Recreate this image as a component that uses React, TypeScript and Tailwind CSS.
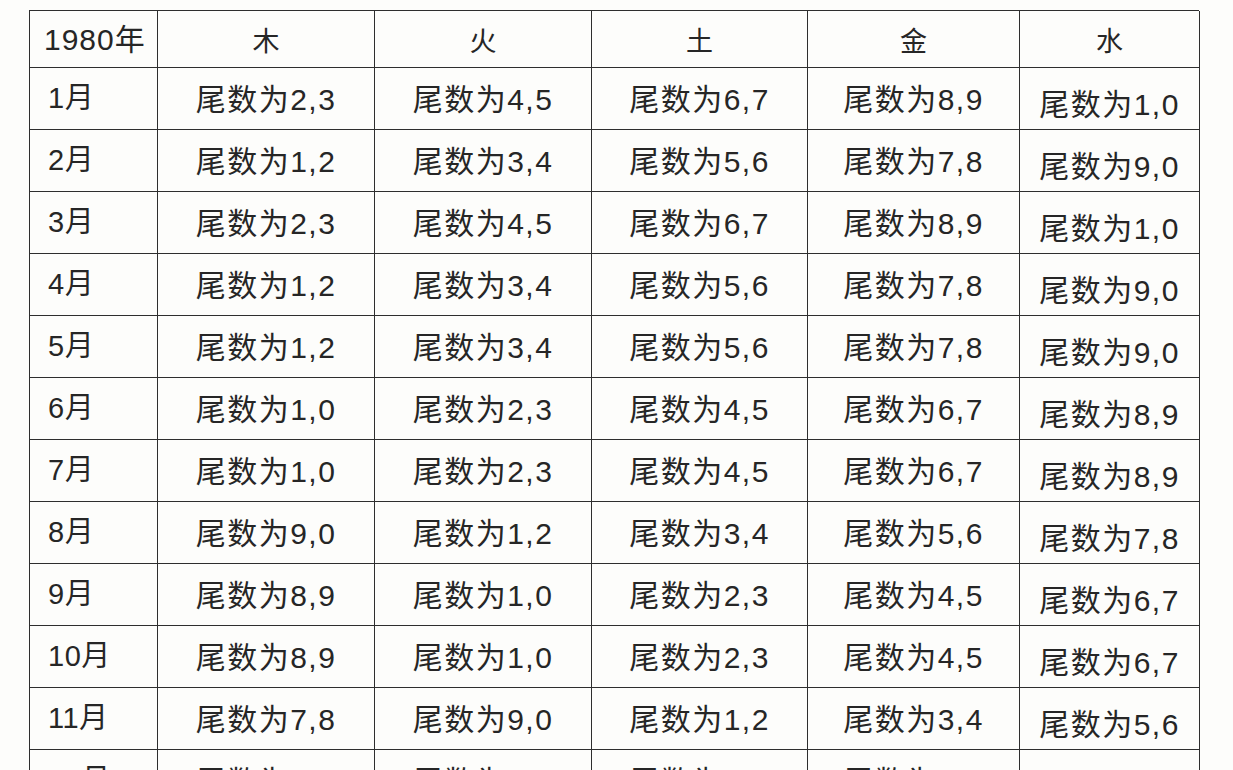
import React from 'react';

const HEAD = ['1980年', '木', '火', '土', '金', '水'];

const ROWS: [string, string[]][] = [
  ['1月', ['2,3', '4,5', '6,7', '8,9', '1,0']],
  ['2月', ['1,2', '3,4', '5,6', '7,8', '9,0']],
  ['3月', ['2,3', '4,5', '6,7', '8,9', '1,0']],
  ['4月', ['1,2', '3,4', '5,6', '7,8', '9,0']],
  ['5月', ['1,2', '3,4', '5,6', '7,8', '9,0']],
  ['6月', ['1,0', '2,3', '4,5', '6,7', '8,9']],
  ['7月', ['1,0', '2,3', '4,5', '6,7', '8,9']],
  ['8月', ['9,0', '1,2', '3,4', '5,6', '7,8']],
  ['9月', ['8,9', '1,0', '2,3', '4,5', '6,7']],
  ['10月', ['8,9', '1,0', '2,3', '4,5', '6,7']],
  ['11月', ['7,8', '9,0', '1,2', '3,4', '5,6']],
  ['12月', ['7,8', '9,0', '1,2', '3,4', '5,6']],
];

const cols = 'grid grid-cols-[128px_217px_217px_216px_212px_180px]';
const cell = 'border-r-[1.5px] border-b-[1.5px] border-[#2e2e2e] flex items-center';

export default function App() {
  return (
    <div
      className="h-[770px] w-[1233px] overflow-hidden bg-[#fdfdfb] text-[#262626] pl-[29px] pt-[10px]"
      style={{ fontFamily: '"Liberation Sans", "Noto Sans CJK SC", sans-serif' }}
    >
      <div className="w-[1170px] border-l-[1.5px] border-t-[1.5px] border-[#2e2e2e]">
        {/* header */}
        <div className={`${cols} h-[57px]`}>
          {HEAD.map((h, i) => (
            <div
              key={h}
              className={`${cell} ${i === 0 ? 'pl-[14px] text-[30px] tracking-[1px]' : 'justify-center text-[27px] pt-[6px]'}`}
            >
              {h}
            </div>
          ))}
        </div>

        {/* months */}
        {ROWS.map(([m, vals]) => (
          <div key={m} className={`${cols} h-[62px]`}>
            <div className={`${cell} pl-[18px] text-[29px] tracking-[0.5px]`}>{m}</div>
            {vals.map((v, i) => (
              <div key={i} className={`${cell} justify-center text-[30px] tracking-[1.5px] ${i === 4 ? 'pt-[12px] text-[28px]' : 'pt-[2px]'}`}>
                尾数为{v}
              </div>
            ))}
          </div>
        ))}
      </div>
    </div>
  );
}
